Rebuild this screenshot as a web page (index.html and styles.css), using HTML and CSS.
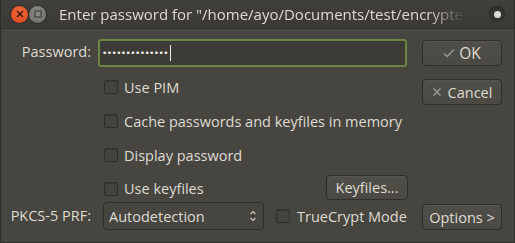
FILE: index.html
```html
<!DOCTYPE html>
<html>
<head>
    <title>Enter password</title>
    <meta name="viewport" content="width=device-width, initial-scale=1.0">
    <link rel="stylesheet" href="styles.css">
</head>
<body>
    <div class="window">
        <header class="titlebar">
            <div class="win-btn close-btn">
                <svg width="8" height="8" viewBox="0 0 8 8"><path d="M1 1L7 7M7 1L1 7" stroke="#3a1a10" stroke-width="1.6"/></svg>
            </div>
            <div class="win-btn min-btn">
                <svg width="8" height="8" viewBox="0 0 8 8"><rect x="1" y="1" width="6" height="6" fill="none" stroke="#4a4944" stroke-width="1.4"/></svg>
            </div>
            <div class="title">Enter password for "/home/ayo/Documents/test/encrypted"</div>
            <div class="menu-btn"><span></span></div>
        </header>

        <div class="dialog">
            <label class="field-label row-1">Password:</label>
            <div class="password-input row-1">
                <span class="dots">••••••••••••••</span><span class="caret"></span>
            </div>
            <button class="btn btn-ok row-1">
                <svg width="12" height="10" viewBox="0 0 12 10"><path d="M1 5.5L4.2 8.5L11 1.5" fill="none" stroke="#9c9a94" stroke-width="1.5"/></svg>
                OK
            </button>

            <label class="check-row row-2"><span class="checkbox"></span>Use PIM</label>
            <button class="btn btn-cancel row-2">
                <svg width="10" height="10" viewBox="0 0 10 10"><path d="M1.5 1.5L8.5 8.5M8.5 1.5L1.5 8.5" stroke="#9c9a94" stroke-width="1.4"/></svg>
                Cancel
            </button>

            <label class="check-row row-3"><span class="checkbox"></span>Cache passwords and keyfiles in memory</label>
            <label class="check-row row-4"><span class="checkbox"></span>Display password</label>

            <div class="keyfiles-row row-5">
                <label class="check-row"><span class="checkbox"></span>Use keyfiles</label>
                <button class="btn btn-keyfiles">Keyfiles...</button>
            </div>

            <label class="field-label prf-label row-6">PKCS-5 PRF:</label>
            <div class="prf-row row-6">
                <div class="select">
                    <span>Autodetection</span>
                    <svg width="8" height="14" viewBox="0 0 8 14"><path d="M1.5 5L4 2.5L6.5 5M1.5 9L4 11.5L6.5 9" fill="none" stroke="#c9c5bc" stroke-width="1.2"/></svg>
                </div>
                <label class="check-row truecrypt"><span class="checkbox"></span>TrueCrypt Mode</label>
            </div>
            <button class="btn btn-options row-6">Options &gt;</button>
        </div>
    </div>
</body>
</html>
```

FILE: styles.css
```css
body {
    margin: 0;
    padding: 0;
    background-color: #46453f;
    font-family: "Open Sans", "Noto Sans", sans-serif;
    font-size: 14.5px;
    color: #dfdbd2;
}
.window {
    width: 515px;
    height: 243px;
    box-sizing: border-box;
    border: 1px solid #2f2e2a;
    border-top: none;
    display: flex;
    flex-direction: column;
    overflow: hidden;
}
.titlebar {
    height: 29px;
    flex: none;
    background: linear-gradient(#403f3b, #3a3935);
    border-bottom: 1px solid #2f2e2a;
    display: flex;
    align-items: center;
    padding-left: 10px;
    padding-right: 9px;
    box-sizing: border-box;
}
.win-btn {
    width: 17px;
    height: 17px;
    border-radius: 50%;
    display: flex;
    align-items: center;
    justify-content: center;
    margin-right: 1px;
}
.close-btn {
    background: radial-gradient(circle at 50% 35%, #f26a3a, #d9461b);
    box-shadow: 0 0 0 1px #2f2e2a;
}
.min-btn {
    background: radial-gradient(circle at 50% 35%, #8a8984, #6e6d68);
    box-shadow: 0 0 0 1px #2f2e2a;
}
.title {
    flex: 1;
    margin-left: 12px;
    font-size: 15px;
    color: #dfdbd2;
    white-space: nowrap;
    overflow: hidden;
    -webkit-mask-image: linear-gradient(to right, #000 88%, transparent 97%);
    mask-image: linear-gradient(to right, #000 88%, transparent 97%);
    margin-top: -1px;
}
.menu-btn {
    width: 16px;
    height: 16px;
    border-radius: 50%;
    background: #35342f;
    box-shadow: inset 0 1px 2px #252420;
    display: flex;
    align-items: center;
    justify-content: center;
    margin-left: 12px;
}
.menu-btn span {
    width: 7px;
    height: 7px;
    border-radius: 50%;
    background: #dcdad4;
}
.dialog {
    display: grid;
    grid-template-columns: 84px 316px 95px;
    grid-template-rows: 31px 34px 34px 34px 30px 28px;
    padding: 10px 0 0 6px;
}
.row-1 { grid-row: 1; }
.row-2 { grid-row: 2; }
.row-3 { grid-row: 3; }
.row-4 { grid-row: 4; }
.row-5 { grid-row: 5; }
.row-6 { grid-row: 6; }
.field-label {
    grid-column: 1;
    text-align: right;
    height: 26px;
    line-height: 26px;
    align-self: start;
    white-space: nowrap;
}
.prf-label {
    align-self: stretch;
    line-height: 28px;
    height: 28px;
}
.password-input {
    grid-column: 2;
    margin-left: 7px;
    height: 24px;
    align-self: start;
    border: 2px solid #6c8545;
    border-radius: 3px;
    background-color: #3c3b36;
    display: flex;
    align-items: center;
    padding-left: 2px;
}
.dots {
    font-size: 9px;
    letter-spacing: -0.6px;
    color: #f4f2ee;
    font-family: "DejaVu Sans", sans-serif;
}
.caret {
    width: 1px;
    height: 16px;
    background: #f0eee8;
    margin-left: 2px;
}
.btn {
    grid-column: 3;
    margin-left: 15px;
    font-family: inherit;
    font-size: 14.5px;
    color: #dfdbd2;
    background: linear-gradient(#4f4e49, #4a4944);
    border: 1px solid #2f2e2a;
    border-radius: 4px;
    box-shadow: inset 0 1px 0 #57564f;
    height: 26px;
    padding: 0 4px;
    display: flex;
    align-items: center;
    justify-content: center;
    gap: 4px;
    white-space: nowrap;
}
.btn-ok {
    align-self: start;
    margin-top: 1px;
    font-size: 15.5px;
}
.btn-cancel {
    align-self: start;
    margin-top: 9px;
    gap: 6px;
}
.btn-options {
    align-self: end;
}
.check-row {
    grid-column: 2;
    display: flex;
    align-items: center;
    margin-left: 13px;
    white-space: nowrap;
}
.checkbox {
    width: 12px;
    height: 12px;
    border: 1px solid #2f2e2a;
    border-radius: 2px;
    background: #44433e;
    box-shadow: inset 0 1px 1px #3a3934;
    margin-right: 6px;
    flex: none;
}
.check-row.row-2 {
    align-self: start;
    height: 34px;
}
.keyfiles-row {
    grid-column: 2;
    display: flex;
    justify-content: space-between;
    align-items: center;
}
.keyfiles-row .check-row {
    margin-top: 3px;
}
.btn-keyfiles {
    height: 25px;
    width: 82px;
    padding: 0;
    margin-left: 0;
    margin-right: -1px;
}
.prf-row {
    grid-column: 2;
    display: flex;
    align-items: center;
    white-space: nowrap;
}
.select {
    height: 26px;
    margin-left: 12px;
    border: 1px solid #2f2e2a;
    border-radius: 4px;
    background: #46453f;
    display: flex;
    align-items: center;
    justify-content: space-between;
    padding: 0 6px 0 5px;
    width: 148px;
}
.truecrypt {
    margin-left: 12px;
}
.truecrypt .checkbox {
    margin-right: 7px;
}
```
